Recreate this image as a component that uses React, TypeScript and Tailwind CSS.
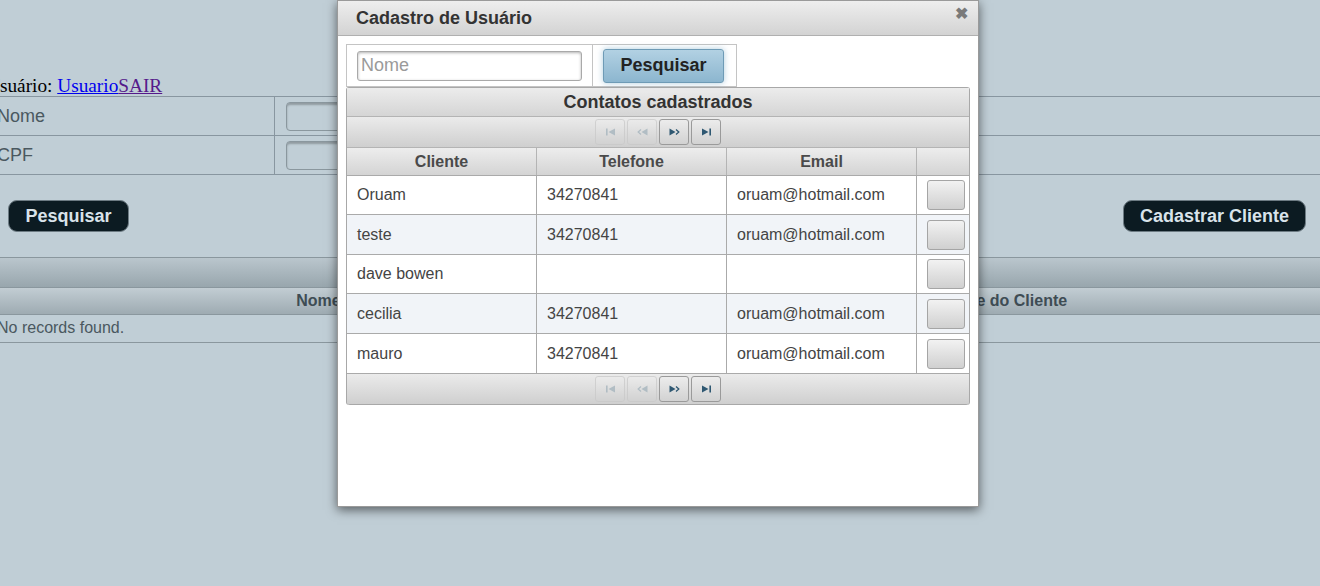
import React from "react";

type Contato = { cliente: string; telefone: string; email: string; h: string };

const contatos: Contato[] = [
  { cliente: "Oruam", telefone: "34270841", email: "oruam@hotmail.com", h: "h-[39px]" },
  { cliente: "teste", telefone: "34270841", email: "oruam@hotmail.com", h: "h-[40px]" },
  { cliente: "dave bowen", telefone: "", email: "", h: "h-[39px]" },
  { cliente: "cecilia", telefone: "34270841", email: "oruam@hotmail.com", h: "h-[40px]" },
  { cliente: "mauro", telefone: "34270841", email: "oruam@hotmail.com", h: "h-[40px]" },
];

const PageIcon = ({ kind, disabled }: { kind: "first" | "prev" | "next" | "last"; disabled?: boolean }) => {
  const c = disabled ? "#9fb0ba" : "#2f5872";
  return (
    <svg width="11" height="8" viewBox="0 0 11 8">
      {kind === "first" && (
        <>
          <rect x="1" y="0.5" width="1.6" height="7" fill={c} />
          <polygon points="10,0.5 3.5,4 10,7.5" fill={c} />
        </>
      )}
      {kind === "prev" && (
        <>
          <polyline points="4,1.5 1.2,4 4,6.5" fill="none" stroke={c} strokeWidth="1.3" />
          <polygon points="10.5,0.5 4.5,4 10.5,7.5" fill={c} />
        </>
      )}
      {kind === "next" && (
        <>
          <polygon points="0.5,0.5 6.5,4 0.5,7.5" fill={c} />
          <polyline points="7,1.5 9.8,4 7,6.5" fill="none" stroke={c} strokeWidth="1.3" />
        </>
      )}
      {kind === "last" && (
        <>
          <polygon points="1,0.5 7.5,4 1,7.5" fill={c} />
          <rect x="8.4" y="0.5" width="1.6" height="7" fill={c} />
        </>
      )}
    </svg>
  );
};

const Paginator = ({ bottom }: { bottom?: boolean }) => (
  <div
    className={
      "flex h-[31px] items-center justify-center gap-[2px] bg-gradient-to-b from-[#ebebeb] to-[#cfcfcf] " +
      (bottom ? "rounded-b-[3px] border-b border-[#a8a8a8]" : "border-b border-[#b4b4b4]")
    }
  >
    {(["first", "prev", "next", "last"] as const).map((k, i) => {
      const disabled = i < 2;
      return (
        <div
          key={k}
          className={
            "flex h-[26px] w-[30px] items-center justify-center rounded-[3px] border bg-gradient-to-b from-[#ececec] to-[#d2d2d2] " +
            (disabled ? "border-[#c8c8c8] opacity-70" : "border-[#9a9a9a]")
          }
        >
          <PageIcon kind={k} disabled={disabled} />
        </div>
      );
    })}
  </div>
);

export default function App() {
  return (
    <div
      className="relative h-[586px] w-full overflow-hidden bg-[#c0ced6]"
      style={{ fontFamily: '"Liberation Sans", Arial, sans-serif' }}
    >
      {/* pagina de fundo */}
      <div className="ml-[-14px] w-[calc(100%+14px)] pt-[75px]">
        <div
          className="h-[21px] text-[19.3px] leading-[21px] text-black"
          style={{ fontFamily: '"Liberation Serif", "Times New Roman", serif' }}
        >
          Usuário: <span className="text-[#0000ee] underline">Usuario</span>
          <span className="text-[#551a8b] underline">SAIR</span>
        </div>
        <div className="border-t border-[#8896a0] text-[18px] text-[#4a5860]">
          {["Nome", "CPF"].map((l) => (
            <div key={l} className="flex h-[39px] border-b border-[#8896a0]">
              <div className="flex w-[289px] items-center border-r border-[#8896a0] pl-[11px]">{l}</div>
              <div className="flex items-center pl-[11px]">
                <div className="h-[29px] w-[260px] rounded-[4px] border border-[#8a979e] shadow-[inset_0_2px_2px_rgba(0,0,0,0.25)]" />
              </div>
            </div>
          ))}
        </div>
        <div className="flex items-center justify-between pl-[22px] pr-[14px] pt-[25px]">
          <button className="h-[32px] w-[121px] rounded-[9px] border border-[#6d7b83] bg-[#0c1b22] text-[18px] font-bold text-[#d9e3ea]">
            Pesquisar
          </button>
          <button className="h-[32px] w-[183px] rounded-[9px] border border-[#6d7b83] bg-[#0c1b22] text-[18px] font-bold text-[#d9e3ea]">
            Cadastrar Cliente
          </button>
        </div>
        <div className="mt-[25px] h-[30px] border-t border-[#8a979e] bg-gradient-to-b from-[#bac6cd] to-[#98a6ad]" />
        <div className="flex h-[28px] border-y border-[#8a979e] bg-gradient-to-b from-[#c2cdd3] to-[#9eabb2] text-[16px] font-bold leading-[26px] text-[#3e4c54]">
          <div className="w-[684px] text-center">Nome</div>
          <div className="w-[680px] pl-[290px]">Nome do Cliente</div>
        </div>
        <div className="h-[28px] border-b border-[#8a979e] pl-[11px] text-[16px] leading-[26px] text-[#4a5860]">
          No records found.
        </div>
      </div>

      {/* dialogo */}
      <div className="absolute left-[337px] top-0 flex h-[507px] w-[642px] flex-col border border-[#9a9a9a] bg-white shadow-[0_3px_10px_rgba(0,0,0,0.55)]">
        <div className="relative flex h-[35px] items-center border-b border-[#b0b0b0] bg-gradient-to-b from-[#eeeeee] to-[#d3d3d3] pl-[18px] text-[18px] font-bold text-[#333]">
          Cadastro de Usuário
          <span className="absolute right-[10px] top-[1px] text-[16px] font-bold text-[#7a7a7a]">✖</span>
        </div>
        <div className="px-[8px] pt-[8px]">
          <div className="flex h-[43px] w-[391px] border border-[#c4c4c4]">
            <div className="flex w-[246px] items-center border-r border-[#c4c4c4] pl-[10px]">
              <input
                placeholder="Nome"
                className="h-[30px] w-[225px] rounded-[3px] border border-[#a9a9a9] px-[3px] text-[18px] text-[#333] shadow-[inset_0_1px_3px_rgba(0,0,0,0.3)] outline-none placeholder:text-[#9a9a9a]"
              />
            </div>
            <div className="flex items-center pl-[10px]">
              <button className="h-[34px] w-[121px] rounded-[3px] border border-[#6e9bb6] bg-gradient-to-b from-[#b2d1e3] to-[#8cb6cf] text-[18px] font-bold text-[#222] shadow-[0_0_6px_rgba(120,170,200,0.6)]">
                Pesquisar
              </button>
            </div>
          </div>

          <div className="w-[624px] rounded-[3px] border border-[#a8a8a8] border-b-0">
            <div className="flex h-[29px] items-center justify-center border-b border-[#b4b4b4] bg-gradient-to-b from-[#ececec] to-[#d5d5d5] text-[18px] font-bold text-[#333]">
              Contatos cadastrados
            </div>
            <Paginator />
            <div className="flex h-[28px] border-b border-[#aaa] bg-gradient-to-b from-[#ededed] to-[#d4d4d4] text-[16px] font-bold leading-[27px] text-[#4a4a4a]">
              <div className="w-[190px] border-r border-[#b4b4b4] text-center">Cliente</div>
              <div className="w-[190px] border-r border-[#b4b4b4] text-center">Telefone</div>
              <div className="w-[190px] border-r border-[#b4b4b4] text-center">Email</div>
              <div className="flex-1" />
            </div>
            {contatos.map((c, i) => (
              <div
                key={c.cliente}
                className={
                  "flex border-b border-[#aaa] text-[16px] text-[#444] " +
                  c.h +
                  (i % 2 === 1 ? " bg-[#f1f4f8]" : " bg-white")
                }
              >
                <div className="flex w-[190px] items-center border-r border-[#aaa] pl-[10px]">{c.cliente}</div>
                <div className="flex w-[190px] items-center border-r border-[#aaa] pl-[10px]">{c.telefone}</div>
                <div className="flex w-[190px] items-center border-r border-[#aaa] pl-[10px]">{c.email}</div>
                <div className="flex flex-1 items-center pl-[10px]">
                  <button className="h-[30px] w-[38px] rounded-[3px] border border-[#a5a5a5] bg-gradient-to-b from-[#f2f2f2] to-[#d0d0d0]" />
                </div>
              </div>
            ))}
            <Paginator bottom />
          </div>
        </div>
      </div>
    </div>
  );
}
